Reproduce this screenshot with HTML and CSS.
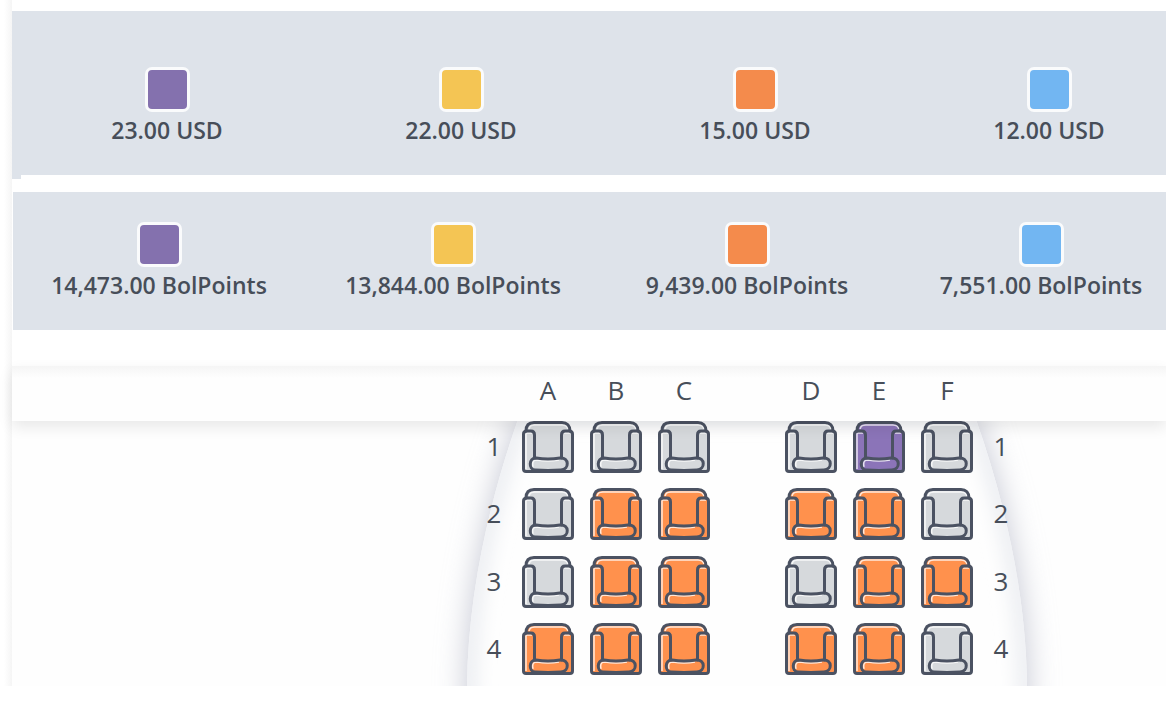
FILE: index.html
```
<!DOCTYPE html>
<html lang="en">
<head>
<meta charset="utf-8">
<title>Seat selection</title>
<link rel="stylesheet" href="styles.css">
</head>
<body>
<svg class="defs" aria-hidden="true">
  <symbol id="seat" viewBox="0 0 52 52">
    <path fill="currentColor" d="M4 10C4 4 7 2 12 2H40C45 2 48 5 48 10L51 12V48Q51 51 48 51H4Q1 51 1 48V12Z"/>
    <g fill="none" stroke="#fff" stroke-width="1.5" opacity=".8">
      <path d="M7 8C8 5 9 4 13 4H40C43 4 45 5 46 8"/>
      <path d="M4 48V12H10M42 12H48M11 46C10 41 11 39 15 39Q26 41 37 39"/>
    </g>
    <g fill="none" stroke="#4b5262" stroke-width="3" stroke-linecap="round" stroke-linejoin="round">
      <path d="M4 10C4 4 7 1.500 12 1.500H40C45 1.500 48 5 48 10"/>
      <path d="M12.500 37V14Q12.500 10 9 10H5Q1.500 10 1.500 13V48Q1.500 50.500 4 50.500H48Q50.500 50.500 50.500 48V13Q50.500 10 47 10H43Q39.500 10 39.500 14V37"/>
      <path d="M14 37Q26 39 38 37C47.500 36 47.500 48.500 39 49Q26 50 13 49C6.500 48.500 6.500 37 14 37Z"/>
    </g>
  </symbol>
</svg>
<main class="page">
  <section class="legend legend-cash" aria-label="Prices in USD">
    <ul class="legend-list">
      <li class="price"><span class="swatch purple"></span>23.00 USD</li>
      <li class="price"><span class="swatch yellow"></span>22.00 USD</li>
      <li class="price"><span class="swatch orange"></span>15.00 USD</li>
      <li class="price"><span class="swatch blue"></span>12.00 USD</li>
    </ul>
  </section>
  <section class="legend legend-points" aria-label="Prices in BolPoints">
    <ul class="legend-list">
      <li class="price"><span class="swatch purple"></span>14,473.00 BolPoints</li>
      <li class="price"><span class="swatch yellow"></span>13,844.00 BolPoints</li>
      <li class="price"><span class="swatch orange"></span>9,439.00 BolPoints</li>
      <li class="price"><span class="swatch blue"></span>7,551.00 BolPoints</li>
    </ul>
  </section>
  <header class="columns map-grid">
    <span class="col-a">A</span><span>B</span><span>C</span>
    <span class="col-d">D</span><span>E</span><span>F</span>
  </header>
  <section class="cabin" aria-label="Seat map">
    <svg class="hull" viewBox="0 0 700 265" aria-hidden="true">
      <defs>
        <path id="outline" d="M124 -10C95 70 70 170 70 270V400H630V270C630 170 605 70 576 -10Z"/>
        <clipPath id="inside"><use href="#outline"/></clipPath>
        <filter id="soft" x="-20%" y="-20%" width="140%" height="140%"><feGaussianBlur stdDeviation="15"/></filter>
        <filter id="faint" x="-20%" y="-20%" width="140%" height="140%"><feGaussianBlur stdDeviation="9"/></filter>
      </defs>
      <use href="#outline" fill="#c4c7d3" filter="url(#soft)"/>
      <use href="#outline" fill="#fefefe"/>
      <g clip-path="url(#inside)">
        <use href="#outline" fill="none" stroke="#eceef2" stroke-width="20" filter="url(#faint)"/>
      </g>
    </svg>
    <div class="seats map-grid">
      <span class="row-no">1</span>
      <button class="seat taken" aria-label="Seat 1A"><svg><use href="#seat"/></svg></button>
      <button class="seat taken" aria-label="Seat 1B"><svg><use href="#seat"/></svg></button>
      <button class="seat taken" aria-label="Seat 1C"><svg><use href="#seat"/></svg></button>
      <button class="seat taken col-d" aria-label="Seat 1D"><svg><use href="#seat"/></svg></button>
      <button class="seat premium" aria-label="Seat 1E"><svg><use href="#seat"/></svg></button>
      <button class="seat taken" aria-label="Seat 1F"><svg><use href="#seat"/></svg></button>
      <span class="row-no">1</span>

      <span class="row-no">2</span>
      <button class="seat taken" aria-label="Seat 2A"><svg><use href="#seat"/></svg></button>
      <button class="seat" aria-label="Seat 2B"><svg><use href="#seat"/></svg></button>
      <button class="seat" aria-label="Seat 2C"><svg><use href="#seat"/></svg></button>
      <button class="seat col-d" aria-label="Seat 2D"><svg><use href="#seat"/></svg></button>
      <button class="seat" aria-label="Seat 2E"><svg><use href="#seat"/></svg></button>
      <button class="seat taken" aria-label="Seat 2F"><svg><use href="#seat"/></svg></button>
      <span class="row-no">2</span>

      <span class="row-no">3</span>
      <button class="seat taken" aria-label="Seat 3A"><svg><use href="#seat"/></svg></button>
      <button class="seat" aria-label="Seat 3B"><svg><use href="#seat"/></svg></button>
      <button class="seat" aria-label="Seat 3C"><svg><use href="#seat"/></svg></button>
      <button class="seat taken col-d" aria-label="Seat 3D"><svg><use href="#seat"/></svg></button>
      <button class="seat" aria-label="Seat 3E"><svg><use href="#seat"/></svg></button>
      <button class="seat" aria-label="Seat 3F"><svg><use href="#seat"/></svg></button>
      <span class="row-no">3</span>

      <span class="row-no">4</span>
      <button class="seat" aria-label="Seat 4A"><svg><use href="#seat"/></svg></button>
      <button class="seat" aria-label="Seat 4B"><svg><use href="#seat"/></svg></button>
      <button class="seat" aria-label="Seat 4C"><svg><use href="#seat"/></svg></button>
      <button class="seat col-d" aria-label="Seat 4D"><svg><use href="#seat"/></svg></button>
      <button class="seat" aria-label="Seat 4E"><svg><use href="#seat"/></svg></button>
      <button class="seat taken" aria-label="Seat 4F"><svg><use href="#seat"/></svg></button>
      <span class="row-no">4</span>
    </div>
  </section>
</main>
</body>
</html>
```

FILE: styles.css
```
* { box-sizing: border-box; }

body {
  margin: 0;
  background: #fff;
  color: #474e59;
  font-family: "Open Sans", "Noto Sans", sans-serif;
}

.defs {
  display: block;
  width: 0;
  height: 0;
}

.page {
  padding: 11px 0 0 12px;
  overflow: hidden;
  background: linear-gradient(to right, #fff 4px, #fafafa 8px, #f5f5f5 12px, #fff 12px);
}

/* Price legends */
.legend {
  position: relative;
  background: #dee3ea;
}

.legend-cash {
  padding: 56px 0 30px 8px;
  margin-bottom: 17px;
}

.legend-cash::after {
  content: "";
  position: absolute;
  left: 0;
  top: 100%;
  width: 9px;
  height: 4px;
  background: #dee3ea;
}

.legend-points {
  padding: 30px 0;
  margin: 0 0 36px 1px;
}

.legend-list {
  display: grid;
  grid-template-columns: repeat(4, 1fr);
  margin: 0 -30px 0 0;
  padding: 0;
  list-style: none;
}

.legend-points .legend-list { margin: 0 -22px 0 -1px; }

.price {
  display: flex;
  flex-direction: column;
  align-items: center;
  gap: 3px;
  font-size: 23px;
  font-weight: 600;
  line-height: 30px;
  white-space: nowrap;
}

.swatch {
  width: 45px;
  height: 45px;
  border: 3px solid #fafbfc;
  border-radius: 7px;
}

.purple { background: #8471ae; }
.yellow { background: #f4c554; }
.orange { background: #f48b4c; }
.blue { background: #72b6f2; }

/* Seat map */
.map-grid {
  display: grid;
  grid-template-columns: 24px repeat(3, 52px) 43px repeat(3, 52px) 24px;
  column-gap: 16px;
  padding-left: 470px;
}

.col-a { grid-column: 2; }
.col-d { grid-column: 6; }

.columns {
  position: relative;
  z-index: 1;
  padding-bottom: 7px;
  background: linear-gradient(#f5f5f5, #fefefe 12px);
  box-shadow: 0 6px 14px rgba(0, 0, 0, .09);
  font-size: 26px;
  font-weight: 500;
  line-height: 48px;
  text-align: center;
}

.cabin {
  position: relative;
  overflow: hidden;
  background: #fefefe;
}

.hull {
  position: absolute;
  left: 385px;
  top: 0;
  width: 700px;
  height: 265px;
}

.seats {
  position: relative;
  grid-template-rows: 67px 68px 67px 63px;
}

.row-no {
  font-size: 26px;
  line-height: 50px;
  text-align: center;
}

.seat {
  width: 52px;
  height: 52px;
  padding: 0;
  border: 0;
  background: none;
  color: #ff914d;
  cursor: pointer;
}

.seat svg {
  display: block;
  width: 52px;
  height: 52px;
}

.taken { color: #d6d9dc; }
.premium { color: #8b74b8; }
```
